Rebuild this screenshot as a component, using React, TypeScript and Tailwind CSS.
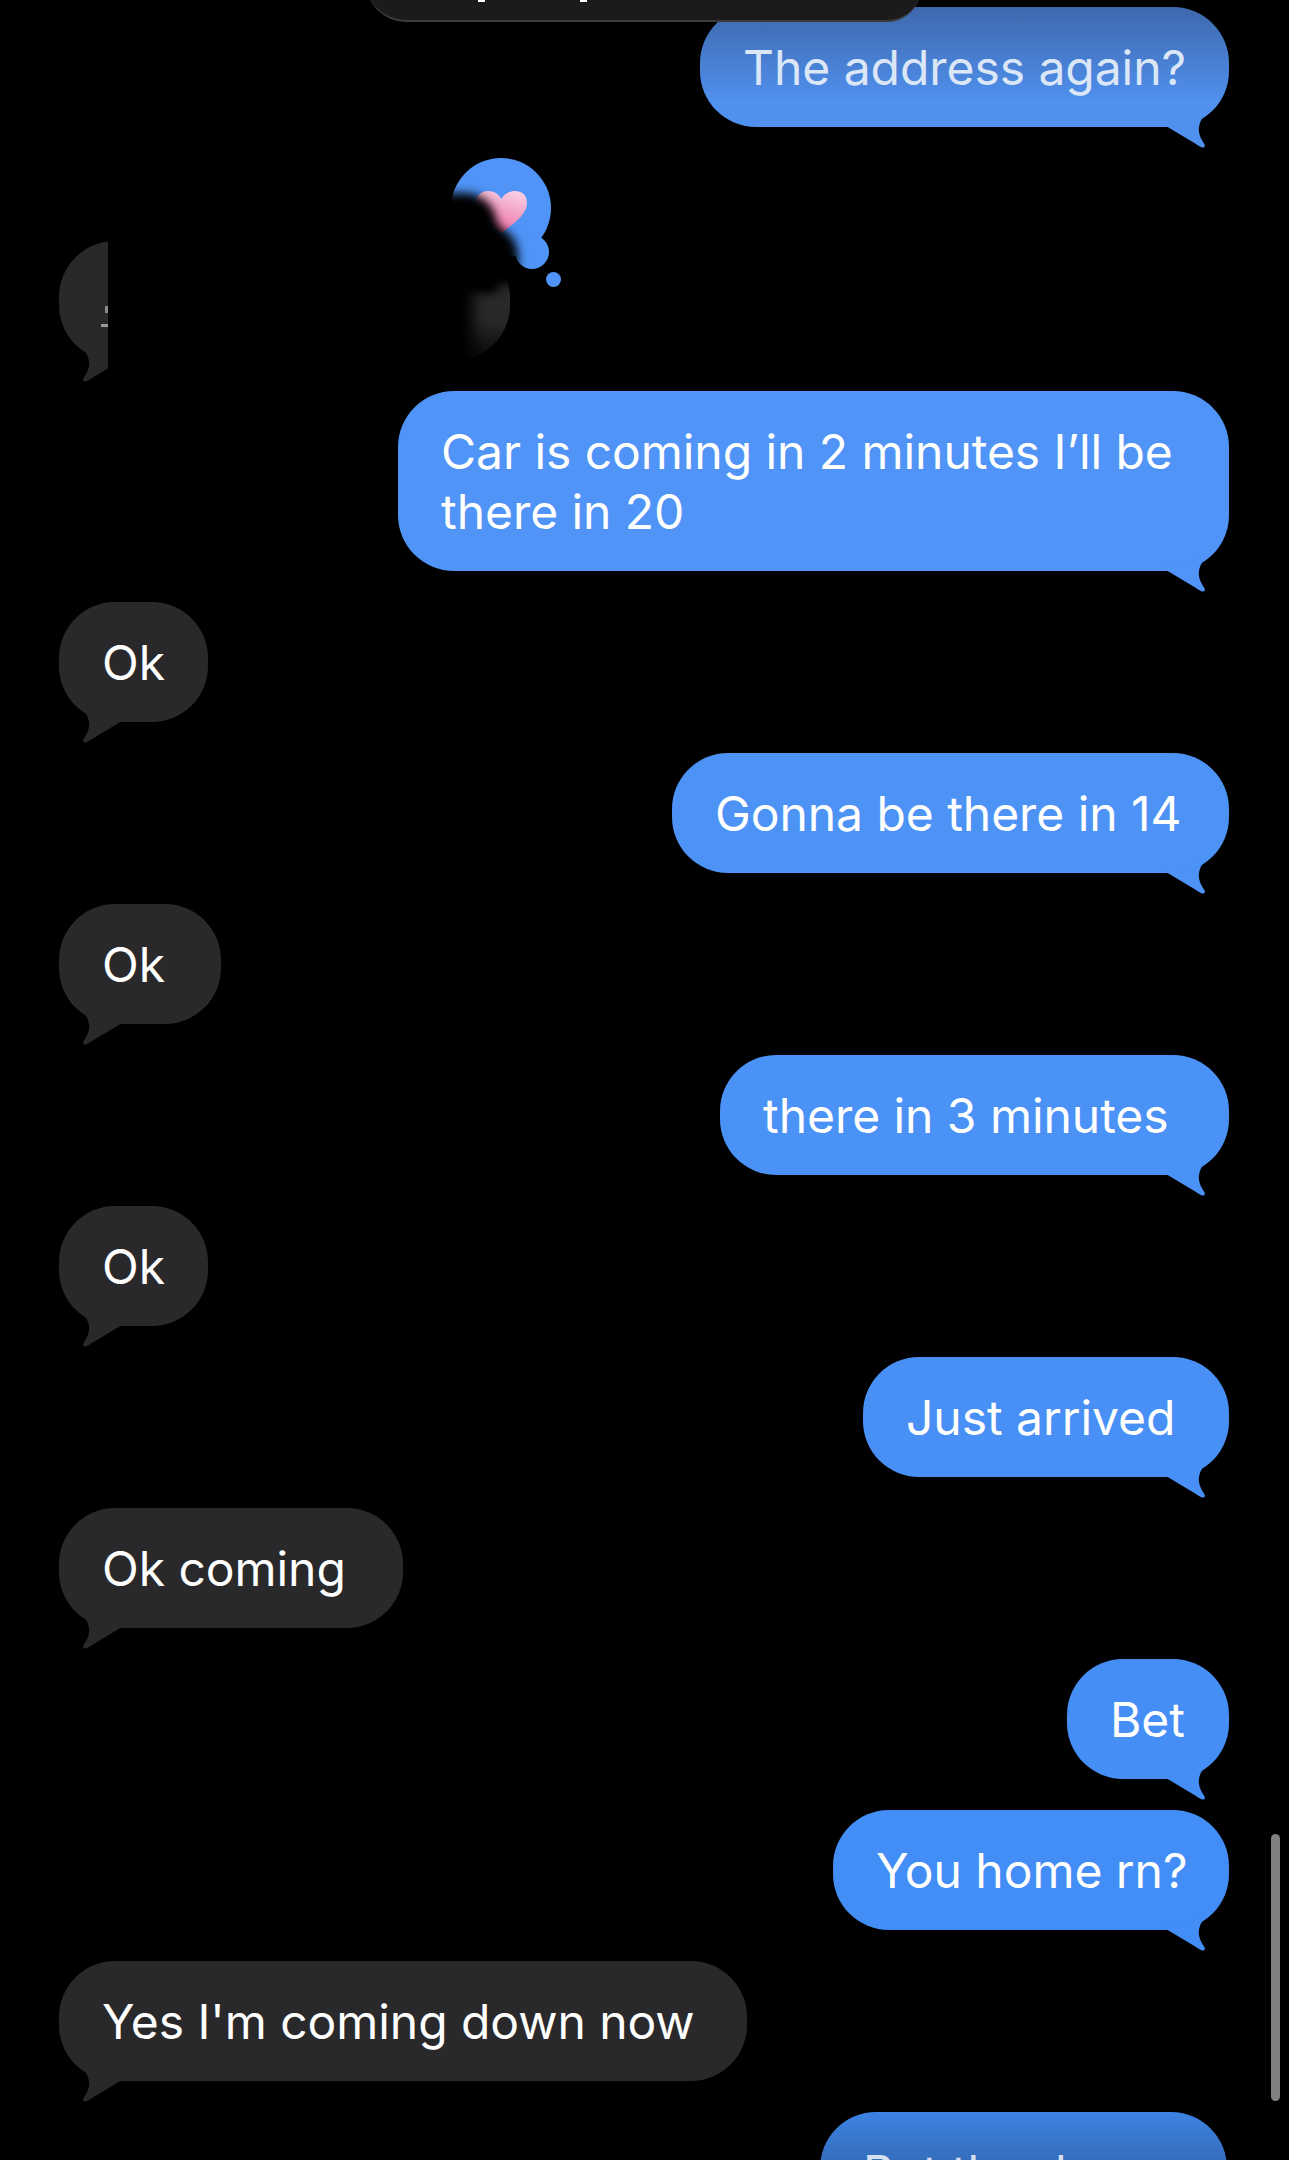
const Tail = ({ className, flip }: { className: string; flip?: boolean }) => (
  <svg
    viewBox="-70 -45 70 70"
    width={70}
    height={70}
    className={`absolute bottom-[-25px] ${flip ? "left-0 -scale-x-100" : "right-0"} ${className}`}
  >
    <path d="M-63 -1 L-33 17 C-31 18.5 -28 20.5 -26 20.5 C-24 20.5 -23.5 18.5 -25 16.5 C-28 12 -31 6 -30 0 C-29 -6 -26 -11 -22 -14 L-40 -8 L-64 -3 Z" />
  </svg>
);

type BubbleProps = {
  text: React.ReactNode;
  bg: string;
  fill: string;
  w: string;
  h?: string;
  left?: boolean;
  textColor?: string;
};

const Bubble = ({ text, bg, fill, w, h = "h-[120px]", left, textColor = "text-white" }: BubbleProps) => (
  <div className={`flex ${left ? "justify-start" : "justify-end"}`}>
    <div className={`relative flex items-center rounded-[56px] pl-[43px] pt-[1px] whitespace-nowrap text-[48px] leading-[60px] tracking-[-0.05px] ${w} ${h} ${bg} ${textColor}`}>
      <Tail className={fill} flip={left} />
      <span className="relative">{text}</span>
    </div>
  </div>
);

const Gray = (p: { text: string; w: string }) => (
  <Bubble text={p.text} w={p.w} bg="bg-[#29292b]" fill="fill-[#29292b]" left />
);

export default function App() {
  return (
    <div className="relative h-[2160px] w-full overflow-hidden bg-black font-['Inter',sans-serif]">
      <div className="flex flex-col pl-[59px] pr-[60px] pt-[7px]">
        <Bubble
          text="The address again?"
          w="w-[529px]"
          bg="bg-linear-to-b from-[#3e68ac] to-[#5091f0] to-80%"
          fill="fill-[#5091f0]"
          textColor="text-[#dbe6f6]"
        />

        <div className="relative mt-[114px]">
          <Bubble text="" w="w-[451px]" bg="bg-[#29292b]" fill="fill-[#29292b]" left />
          {/* reaction bubble */}
          <div className="absolute left-[392px] top-[-83px] flex h-[100px] w-[100px] items-center justify-center rounded-full bg-[#4f94f6]">
            <svg viewBox="0 0 51 42" width={51} height={42} className="mt-[8px]">
              <defs>
                <linearGradient id="heart" x1="0.75" y1="0" x2="0.4" y2="1">
                  <stop offset="0" stopColor="#f8cfe4" />
                  <stop offset="1" stopColor="#ee6ea6" />
                </linearGradient>
              </defs>
              <path
                d="M25.5 42 C12 32 0 22 0 11 C0 4 6 0 12 0 C18 0 23 3 25.5 8 C28 3 33 0 39 0 C46 0 51 4 51 12 C51 23 39 32 25.5 42 Z"
                fill="url(#heart)"
              />
            </svg>
          </div>
          <div className="absolute left-[456px] top-[-6px] h-[34px] w-[34px] rounded-full bg-[#4f94f6]" />
          <div className="absolute left-[487px] top-[31px] h-[15px] w-[15px] rounded-full bg-[#4f94f6]" />
        </div>

        <div className="mt-[30px] flex flex-col gap-[31px]">
          <Bubble
            text={<>Car is coming in 2 minutes I’ll be<br />there in 20</>}
            w="w-[831px]"
            h="h-[180px]"
            bg="bg-[#4f94f6]"
            fill="fill-[#4f94f6]"
          />
          <Gray text="Ok" w="w-[149px]" />
          <Bubble text="Gonna be there in 14" w="w-[557px]" bg="bg-[#4d93f6]" fill="fill-[#4d93f6]" />
          <Gray text="Ok" w="w-[162px]" />
          <Bubble text="there in 3 minutes" w="w-[509px]" bg="bg-[#4b92f6]" fill="fill-[#4b92f6]" />
          <Gray text="Ok" w="w-[149px]" />
          <Bubble text="Just arrived" w="w-[366px]" bg="bg-[#4990f6]" fill="fill-[#4990f6]" />
          <Gray text="Ok coming" w="w-[344px]" />
          <Bubble text="Bet" w="w-[162px]" bg="bg-[#448ef6]" fill="fill-[#448ef6]" />
          <Bubble text="You home rn?" w="w-[396px]" bg="bg-[#428df6]" fill="fill-[#428df6]" />
          <Gray text="Yes I'm coming down now" w="w-[688px]" />
          <div className="flex justify-end pr-[2px]">
            <div className="flex h-[120px] w-[407px] items-center rounded-[56px] bg-linear-to-b from-[#3c83e4] to-[#2b4f85] pl-[43px] pt-[1px] text-[48px] leading-[60px] tracking-[-0.05px] whitespace-nowrap text-[#d5e0f0]">
              But the door
            </div>
          </div>
        </div>
      </div>

      {/* context menu edge at the top */}
      <div className="absolute left-[366px] top-[-40px] h-[62px] w-[555px] rounded-bl-[40px] rounded-br-[34px] border-b-2 border-[#3b3b3c] bg-[#1b1b1c]">
        <div className="absolute left-[112px] top-[40px] h-[2px] w-[7px] bg-white" />
        <div className="absolute left-[214px] top-[40px] h-[2px] w-[7px] bg-white" />
      </div>

      {/* redaction smudge */}
      <div className="absolute left-[108px] top-[170px] h-[218px] w-[450px] overflow-hidden">
        <div className="absolute left-[-30px] top-[23px] h-[100px] w-[419px] rounded-tr-[32px] bg-black blur-[5px]" />
        <div className="absolute left-[-30px] top-[55px] h-[60px] w-[440px] rounded-tr-[30px] bg-black blur-[5px]" />
        <div className="absolute left-[-30px] top-[100px] h-[130px] w-[395px] bg-black blur-[7px]" />
        <div className="absolute left-[340px] top-[150px] h-[45px] w-[70px] bg-linear-to-b from-transparent to-black" />
      </div>
      <div className="absolute left-[105px] top-[306px] h-[7px] w-[3px] bg-[#8a8a8a]" />
      <div className="absolute left-[101px] top-[324px] h-[3px] w-[7px] bg-[#9a9a9a]" />

      {/* scroll indicator */}
      <div className="absolute left-[1271px] top-[1834px] h-[267px] w-[9px] rounded-full bg-[#808080]" />
    </div>
  );
}
